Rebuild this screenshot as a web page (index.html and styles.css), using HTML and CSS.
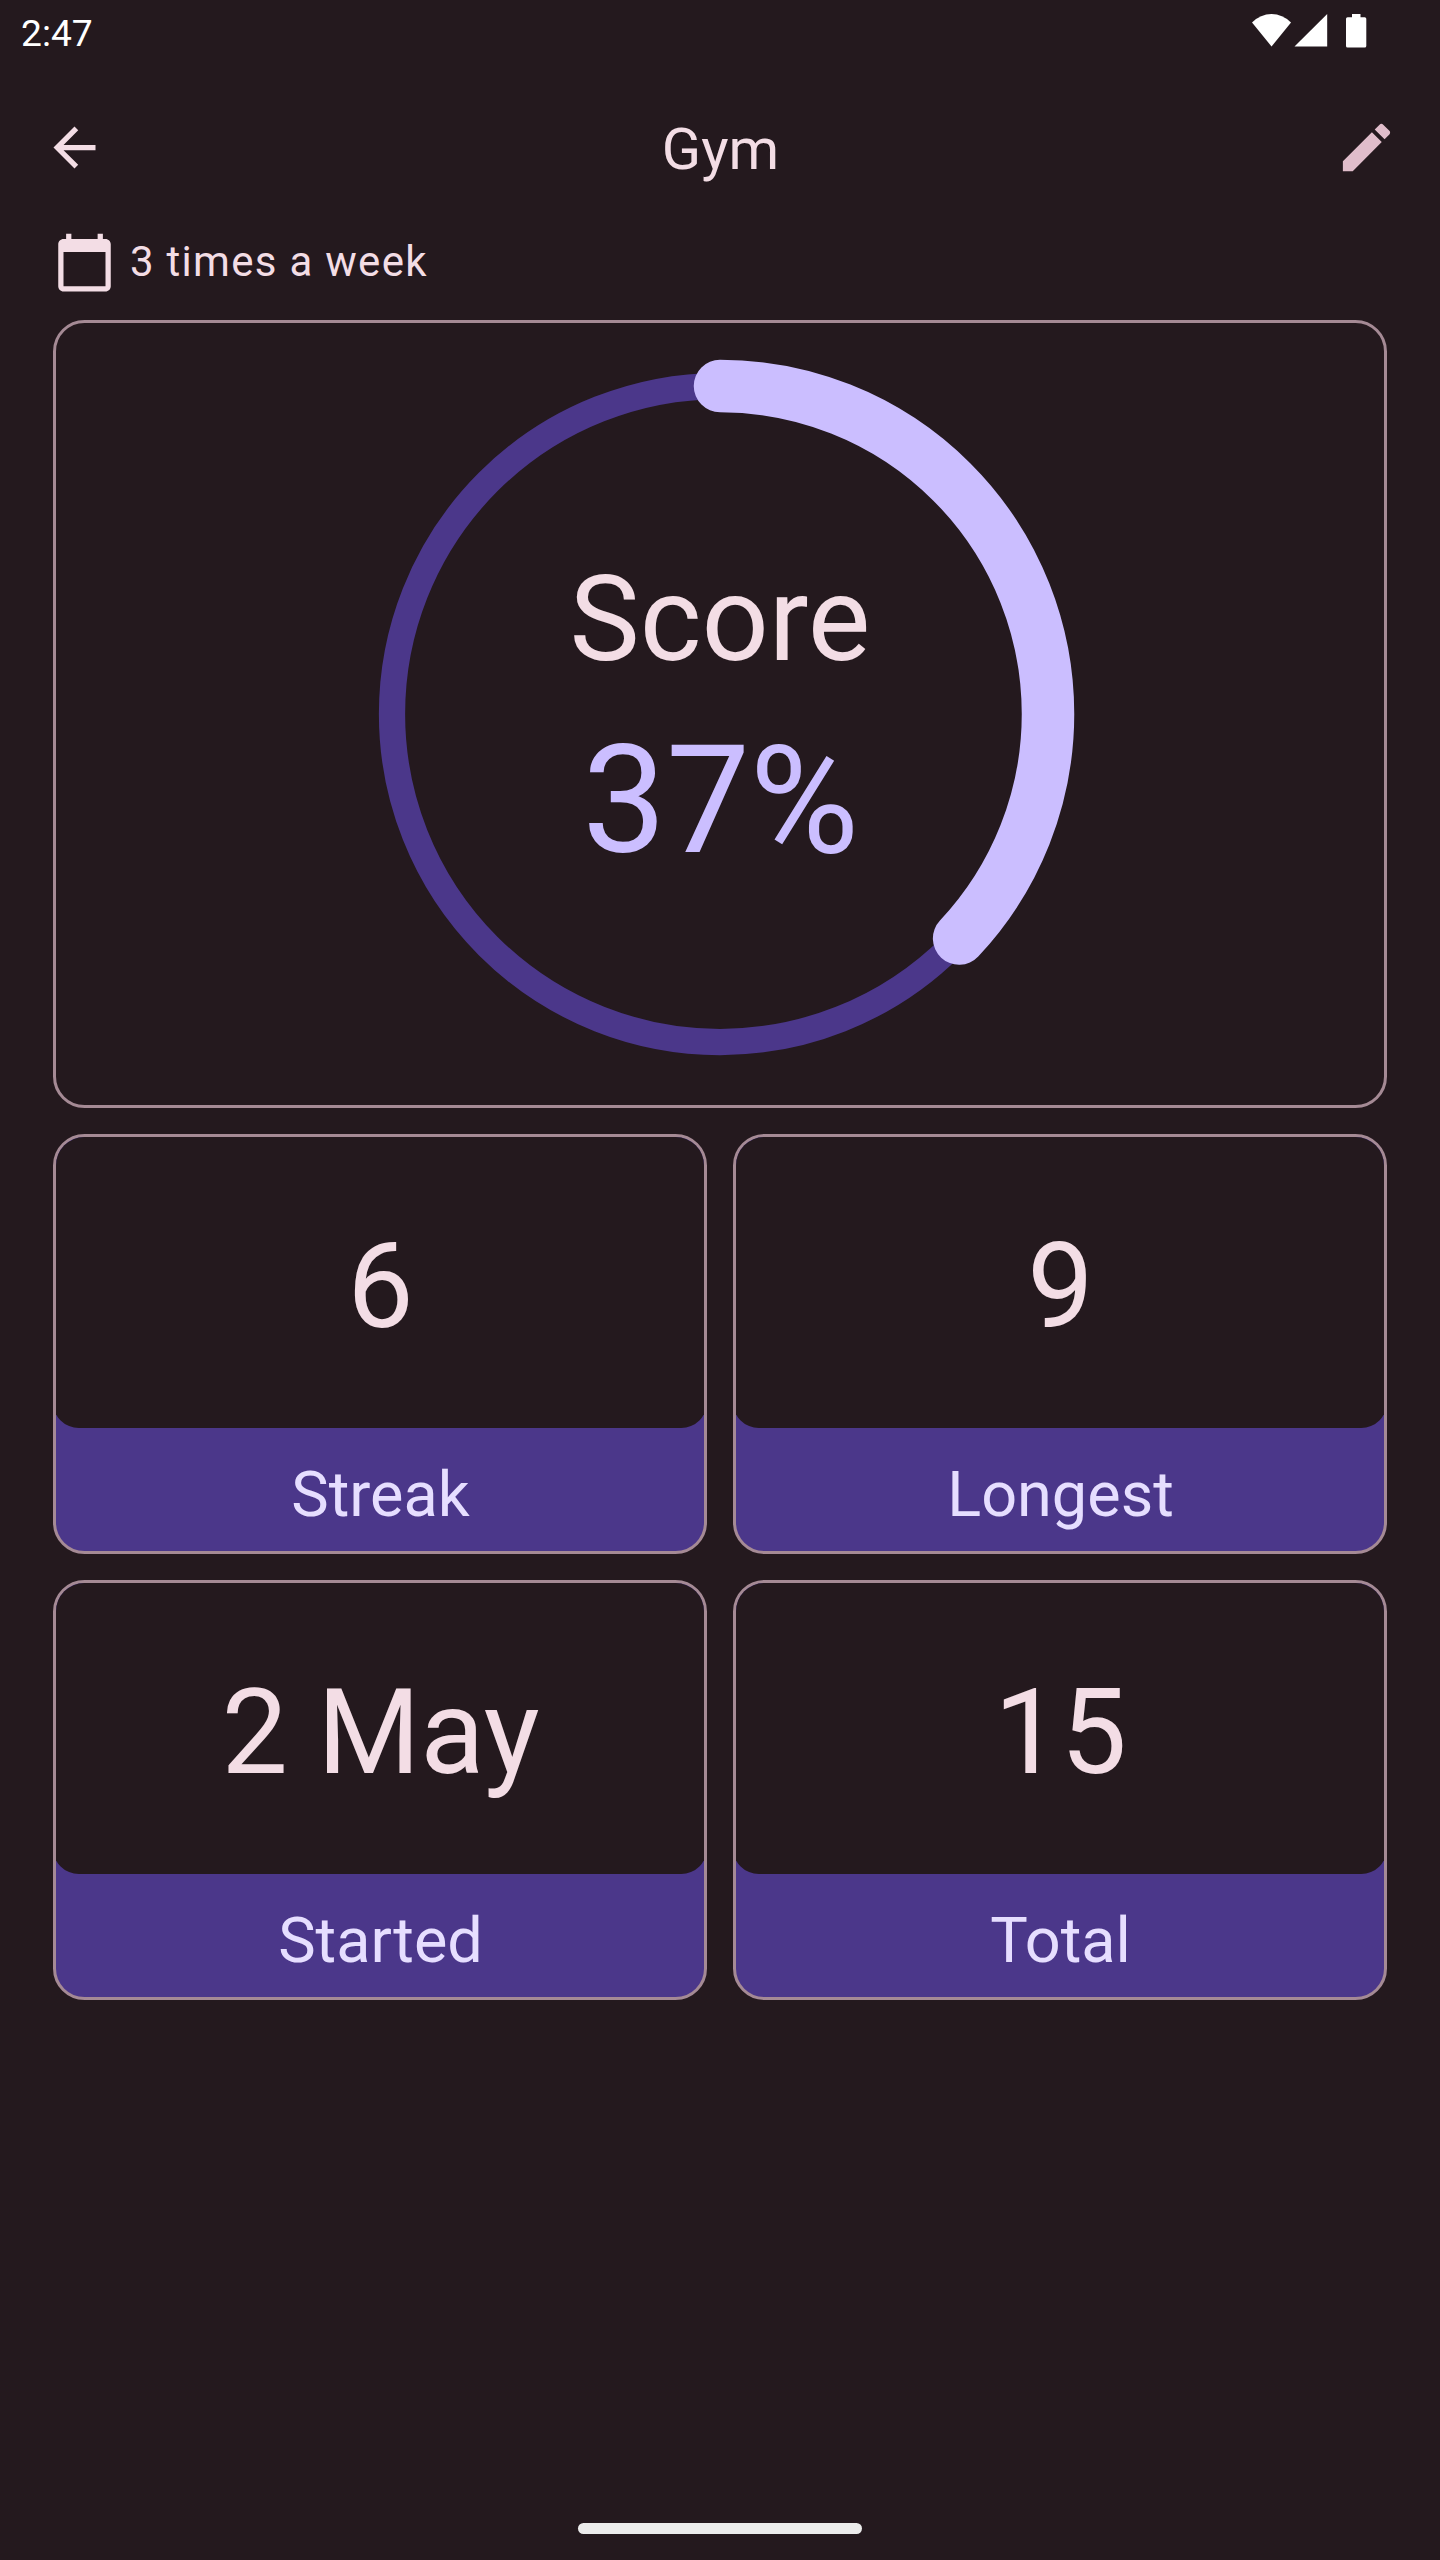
FILE: index.html
```html
<!DOCTYPE html>
<html lang="en">
<head>
<meta charset="utf-8">
<title>Gym</title>
<link rel="stylesheet" href="styles.css">
</head>
<body>
<div class="screen">
  <div class="status-bar">
    <span class="clock">2:47</span>
    <svg class="status-icons" width="116" height="36" viewBox="0 0 116 36" fill="#fff">
      <path d="M20.500 34.500 1 10.500Q9.500 2 20.500 2T40 10.500Z"/>
      <path d="M43.500 34.500 76.200 2v32.500Z"/>
      <path d="M101 2h8.500v3.200h4.200a1.600 1.600 0 0 1 1.600 1.600v27.200a1.600 1.600 0 0 1-1.600 1.600H96.600a1.600 1.600 0 0 1-1.600-1.600V6.800a1.600 1.600 0 0 1 1.600-1.600h4.400Z"/>
    </svg>
  </div>
  <header class="app-bar">
    <svg class="icon" viewBox="0 0 24 24"><path d="M20 11H7.830l5.590-5.590L12 4l-8 8 8 8 1.410-1.410L7.830 13H20v-2z"/></svg>
    <h1 class="title">Gym</h1>
    <svg class="icon icon-edit" viewBox="0 0 24 24"><path d="M3 17.250V21h3.750L17.810 9.940l-3.750-3.750L3 17.250zM20.710 7.040c.39-.39.39-1.020 0-1.410l-2.340-2.340c-.39-.39-1.020-.39-1.410 0l-1.830 1.830 3.750 3.750 1.830-1.830z"/></svg>
  </header>
  <div class="frequency">
    <svg class="icon" viewBox="0 0 24 24"><path d="M20 3h-1V1h-2v2H7V1H5v2H4c-1.100 0-2 .9-2 2v16c0 1.100.9 2 2 2h16c1.100 0 2-.9 2-2V5c0-1.100-.9-2-2-2zm0 18H4V8h16v13z"/></svg>
    <span class="frequency-text">3 times a week</span>
  </div>
  <main class="content">
    <section class="score-card">
      <svg class="ring" viewBox="0 0 710 710" fill="none">
        <circle cx="355" cy="355" r="328" stroke="#4b378a" stroke-width="26.250"/>
        <circle cx="355" cy="355" r="328" stroke="#cbbeff" stroke-width="52.500" stroke-linecap="round" pathLength="100" stroke-dasharray="37 100" transform="rotate(-90 355 355)"/>
      </svg>
      <div class="score-text">
        <span class="score-label">Score</span>
        <span class="score-value">37%</span>
      </div>
    </section>
    <section class="stats">
      <div class="stat"><div class="value">6</div><div class="label">Streak</div></div>
      <div class="stat"><div class="value">9</div><div class="label">Longest</div></div>
      <div class="stat"><div class="value">2 May</div><div class="label">Started</div></div>
      <div class="stat"><div class="value">15</div><div class="label">Total</div></div>
    </section>
  </main>
  <div class="nav-handle"></div>
</div>
</body>
</html>
```
FILE: styles.css
```css
* { box-sizing: border-box; }
body { margin: 0; background: #24191e; }
.screen {
  width: 1440px;
  height: 2560px;
  display: flex;
  flex-direction: column;
  background: #24191e;
  color: #f3dde5;
  font-family: Roboto, sans-serif;
}
.status-bar {
  height: 64px;
  padding: 12px 73px 0 21px;
  display: flex;
  justify-content: space-between;
  align-items: flex-start;
  color: #fff;
}
.clock { font-size: 37.2px; line-height: 43px; }
.icon { width: 63px; height: 63px; fill: #f3dde5; flex: none; }
.icon-edit { fill: #e0bdcb; }
.app-bar {
  height: 167px;
  padding: 0 42px 0 43px;
  display: flex;
  justify-content: space-between;
  align-items: center;
}
.title {
  margin: 2px 0 0;
  font-size: 57.75px;
  font-weight: 400;
  line-height: 74px;
}
.frequency {
  height: 63px;
  margin-bottom: 26px;
  padding-left: 53px;
  display: flex;
  align-items: center;
  gap: 14px;
  font-size: 42px;
  letter-spacing: 1.28px;
}
.frequency-text { margin-bottom: 2px; }
.content { padding: 0 53px; display: flex; flex-direction: column; gap: 26px; }
.score-card {
  height: 788px;
  border: 3px solid #a58a95;
  border-radius: 31.5px;
  display: grid;
  place-items: center;
}
.ring { grid-area: 1 / 1; width: 710px; height: 710px; }
.score-text {
  grid-area: 1 / 1;
  padding-top: 36px;
  display: flex;
  flex-direction: column;
  align-items: center;
}
.score-label { font-size: 118.13px; line-height: 139px; }
.score-value { padding-left: 1px; font-size: 149.63px; line-height: 225px; letter-spacing: -0.5px; color: #cbbeff; }
.stats {
  display: grid;
  grid-template-columns: 1fr 1fr;
  gap: 26px;
}
.stat {
  height: 420px;
  border: 3px solid #a58a95;
  border-radius: 31.5px;
  background: #4b378a;
  overflow: hidden;
}
.value {
  height: 291px;
  margin: 0 -3px;
  padding: 8px 0 0 1px;
  border-radius: 0 0 26px 26px;
  background: #24191e;
  display: flex;
  align-items: center;
  justify-content: center;
  font-size: 118.13px;
}
.label {
  height: 123px;
  padding: 9px 0 0 1px;
  display: flex;
  align-items: center;
  justify-content: center;
  font-size: 63px;
  color: #e6deff;
}
.nav-handle {
  width: 284px;
  height: 11px;
  margin: auto auto 26px;
  border-radius: 6px;
  background: #ececec;
}
```
